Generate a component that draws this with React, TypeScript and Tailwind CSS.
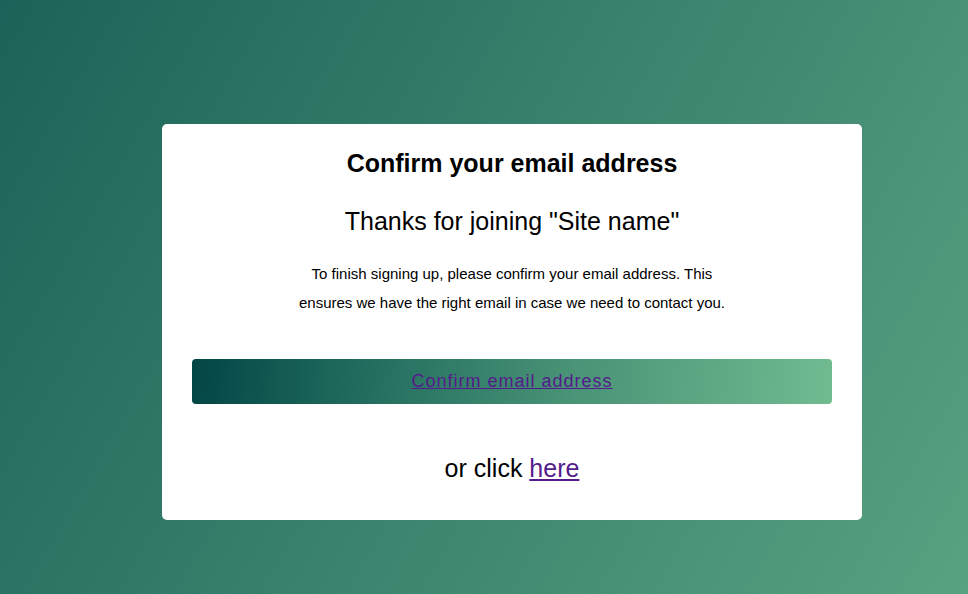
export default function App() {
  return (
    <div className="min-h-[594px] w-full bg-[linear-gradient(120deg,#1b6358,#58a281)] font-['Liberation_Sans',Arial,sans-serif] text-black">
      <div className="pl-[162px] pt-[124px] pb-[74px]">
        {/* Confirmation card */}
        <div className="w-[700px] rounded-[5px] bg-white px-[30px] pt-[20px] pb-[37px] text-center">
          <h1 className="text-[25px] font-bold leading-[38px]">Confirm your email address</h1>
          <h2 className="mt-[24px] text-[25px] leading-[30px]">Thanks for joining "Site name"</h2>
          <p className="mx-auto mt-[23px] w-[440px] text-[15px] leading-[29px]">
            To finish signing up, please confirm your email address. This ensures we have the right email in case we need to contact you.
          </p>
          <a
            href="#"
            className="mt-[42px] flex h-[45px] items-center justify-center rounded-[4px] bg-[linear-gradient(95deg,#034646_0%,#1f6a5c_25%,#4a9477_60%,#70bb90_100%)] text-[18px] tracking-[1px] text-[#551a8b] underline"
          >
            Confirm email address
          </a>
          <p className="mt-[49px] text-[25px] leading-[30px]">
            or click{" "}
            <a href="#" className="text-[#551a8b] underline">
              here
            </a>
          </p>
        </div>
      </div>
    </div>
  );
}
